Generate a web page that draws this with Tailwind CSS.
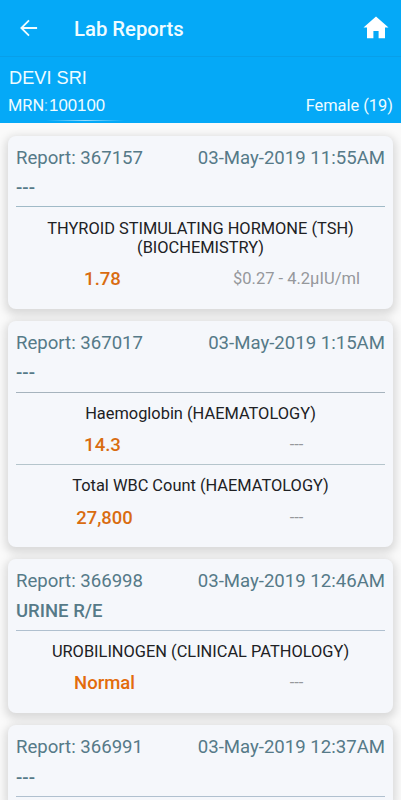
<!DOCTYPE html>
<html lang="en">
<head>
<meta charset="utf-8">
<title>Lab Reports</title>
<script src="https://cdn.jsdelivr.net/npm/@tailwindcss/browser@4"></script>
</head>
<body class="h-[800px] w-[401px] overflow-hidden bg-[#fafafa] font-['Roboto',sans-serif]">
<header class="flex h-[57px] items-center bg-[#05a9f7] pl-5 pr-3 text-[#f0fcff] border-b border-[#089fe9]">
  <svg class="-mt-px size-[18px]" viewBox="0 0 20 20" fill="none" stroke="currentColor" stroke-width="2"><path d="M19 10H2M10 1.5L1.5 10L10 18.5"/></svg>
  <h1 class="ml-9 flex-1 whitespace-nowrap text-[20.3px] font-medium leading-6 pt-[2px]">Lab Reports</h1>
  <svg class="-mt-[2px] h-[23px] w-[26px]" viewBox="0 0 26 23" fill="#fff"><path d="M13 .5L.5 11.5H4V22.3H10.4V15H15.6V22.3H22V11.5H25.5Z"/></svg>
</header>
<section class="flex h-[66px] flex-col bg-[#05a9f7] pl-[9px] pr-2 pt-[9px] text-[#effcff]">
  <div class="h-6 font-['Liberation_Sans',sans-serif] text-[18.2px] leading-6">DEVI SRI</div>
  <div class="flex h-[30px] items-center justify-between pt-[2px] text-[16.4px]">
    <div class="-ml-px flex items-center"><span>MRN<span class="opacity-60">:</span></span><span class="ml-px font-['Liberation_Sans',sans-serif] text-[16.8px]">100100</span></div>
    <div>Female (19)</div>
  </div>
  <div class="ml-[37px] h-px w-[78px] rounded-full bg-gradient-to-r from-white/0 via-white/60 to-white/0"></div>
</section>
<main class="flex flex-col gap-3 px-2 pt-[13px]">
  <article class="h-[173px] shrink-0 rounded-[8px] bg-[#f5f7fb] px-2 pt-[7px] shadow-[0_3px_9px_3px_rgba(0,0,0,0.13)]">
    <div class="flex h-[31px] items-center justify-between whitespace-nowrap text-[18.6px] text-[#567a88]"><span>Report: 367157</span><span>03-May-2019 11:55AM</span></div>
    <div class="flex h-[33px] items-center border-b border-[#a0bac7] pb-[3px] text-[18.6px] font-medium text-[#567a88]">---</div>
    <h2 class="pt-3 text-center text-[16.4px] leading-[19px] text-[#202124]">THYROID STIMULATING HORMONE (TSH)<br>(BIOCHEMISTRY)</h2>
    <div class="grid h-[42px] grid-cols-[172px_1fr] items-center pt-[3px] text-center"><span class="pl-px text-[18.6px] font-medium text-[#d96c10]">1.78</span><span class="pl-5 text-[16.5px] text-[#96989c]">$0.27 - 4.2µIU/ml</span></div>
  </article>
  <article class="h-[226px] shrink-0 rounded-[8px] bg-[#f5f7fb] px-2 pt-[7px] shadow-[0_3px_9px_3px_rgba(0,0,0,0.13)]">
    <div class="flex h-[31px] items-center justify-between whitespace-nowrap text-[18.6px] text-[#567a88]"><span>Report: 367017</span><span>03-May-2019 1:15AM</span></div>
    <div class="flex h-[34px] items-center border-b border-[#a6b3bd] pb-[3px] text-[18.6px] font-medium text-[#567a88]">---</div>
    <h2 class="pt-[11px] text-center text-[16.4px] leading-[19px] text-[#202124]">Haemoglobin (HAEMATOLOGY)</h2>
    <div class="grid h-[42px] grid-cols-[172px_1fr] items-center border-b border-[#b5c5cc] pt-1 text-center"><span class="pl-px text-[18.6px] font-medium text-[#d96c10]">14.3</span><span class="pl-5 text-[16.5px] text-[#96989c]">---</span></div>
    <h2 class="pt-[11px] text-center text-[16.4px] leading-[19px] text-[#202124]">Total WBC Count (HAEMATOLOGY)</h2>
    <div class="grid h-[42px] grid-cols-[172px_1fr] items-center pt-1 text-center"><span class="pl-[5px] text-[18.4px] font-medium text-[#d96c10]">27,800</span><span class="pl-5 text-[16.5px] text-[#96989c]">---</span></div>
  </article>
  <article class="h-[154px] shrink-0 rounded-[8px] bg-[#f5f7fb] px-2 pt-[7px] shadow-[0_3px_9px_3px_rgba(0,0,0,0.13)]">
    <div class="flex h-[31px] items-center justify-between whitespace-nowrap pt-px text-[18.6px] text-[#567a88]"><span>Report: 366998</span><span>03-May-2019 12:46AM</span></div>
    <div class="flex h-[34px] items-center border-b border-[#b0c0cf] pb-[3px] text-[18.5px] font-medium text-[#567a88]">URINE R/E</div>
    <h2 class="pt-[11px] text-center text-[16.4px] leading-[19px] text-[#202124]">UROBILINOGEN (CLINICAL PATHOLOGY)</h2>
    <div class="grid h-[42px] grid-cols-[172px_1fr] items-center pt-[3px] text-center"><span class="pl-[5px] text-[18.5px] font-medium text-[#e36c0b]">Normal</span><span class="pl-5 text-[16.5px] text-[#96989c]">---</span></div>
  </article>
  <article class="h-[75px] shrink-0 rounded-t-[8px] bg-[#f5f7fb] px-2 pt-[7px] shadow-[0_3px_9px_3px_rgba(0,0,0,0.13)]">
    <div class="flex h-[31px] items-center justify-between whitespace-nowrap pt-px text-[18.6px] text-[#567a88]"><span>Report: 366991</span><span>03-May-2019 12:37AM</span></div>
    <div class="flex h-[34px] items-center border-b border-[#b0c0cf] pb-[2px] text-[18.6px] font-medium text-[#567a88]">---</div>
  </article>
</main>
</body>
</html>
